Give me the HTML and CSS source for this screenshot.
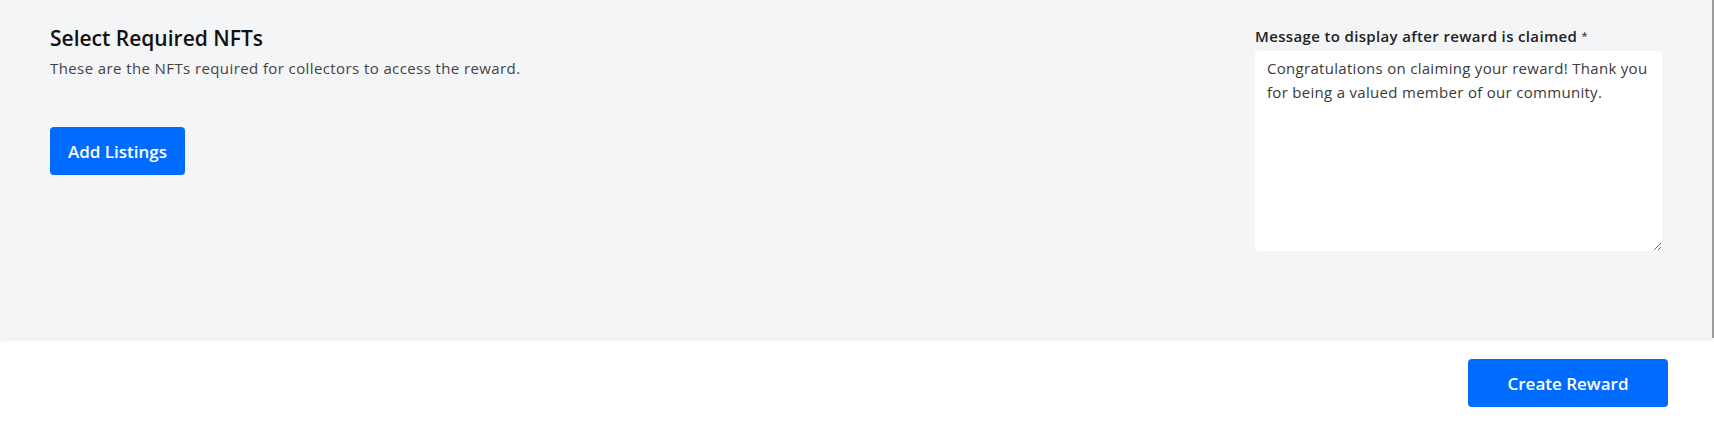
FILE: index.html
```html
<!DOCTYPE html>
<html lang="en">
<head>
<meta charset="UTF-8">
<meta name="viewport" content="width=device-width, initial-scale=1.0">
<title>Create Reward</title>
<link rel="stylesheet" href="styles.css">
</head>
<body>

<main class="panel">
  <section class="nft-section">
    <h2>Select Required NFTs</h2>
    <p>These are the NFTs required for collectors to access the reward.</p>
    <button type="button" class="btn btn-add">Add Listings</button>
  </section>

  <section class="message-section">
    <label for="claimMessage">Message to display after reward is claimed <span class="req">*</span></label>
    <textarea id="claimMessage" name="claimMessage">Congratulations on claiming your reward! Thank you for being a valued member of our community.</textarea>
  </section>
</main>

<footer class="actions">
  <button type="button" class="btn btn-create">Create Reward</button>
</footer>

</body>
</html>
```

FILE: styles.css
```css
body {
  font-family: 'Open Sans', sans-serif;
  margin: 0;
  padding: 0;
  background-color: #fff;
  color: #111;
}
.panel {
  display: flex;
  justify-content: space-between;
  height: 338px;
  box-sizing: border-box;
  padding: 24px 50px 0 50px;
  background-color: #f4f5f7;
  border-right: 2px solid #9b9b9b;
  box-shadow: 0 2px 4px rgba(0, 0, 0, 0.08);
  position: relative;
}
.nft-section h2 {
  margin: 0;
  font-size: 21px;
  line-height: 28px;
  font-weight: 600;
  color: #111;
}
.nft-section p {
  margin: 6px 0 0;
  font-size: 15px;
  line-height: 20px;
  letter-spacing: 0.4px;
  color: #444;
}
.btn {
  border: none;
  border-radius: 4px;
  background-color: #006cff;
  color: #fff;
  font-family: inherit;
  font-size: 17px;
  font-weight: 600;
  height: 48px;
  cursor: pointer;
}
.btn-add {
  margin-top: 49px;
  padding: 0 18px;
}
.btn-create {
  width: 200px;
}
.message-section {
  display: flex;
  flex-direction: column;
  width: 407px;
}
.message-section label {
  font-size: 15px;
  line-height: 20px;
  letter-spacing: 0.35px;
  font-weight: 600;
  color: #222;
  margin: 2px 0 5px;
}
.req {
  font-weight: 400;
  font-size: 11px;
  vertical-align: top;
}
textarea {
  width: 100%;
  height: 200px;
  box-sizing: border-box;
  border: none;
  border-radius: 3px;
  padding: 5px 12px;
  font-family: inherit;
  font-size: 15px;
  line-height: 24px;
  letter-spacing: 0.3px;
  color: #3a3a3a;
  background-color: #fff;
  outline: none;
}
.actions {
  display: flex;
  justify-content: flex-end;
  padding: 21px 46px 0 0;
}
```
